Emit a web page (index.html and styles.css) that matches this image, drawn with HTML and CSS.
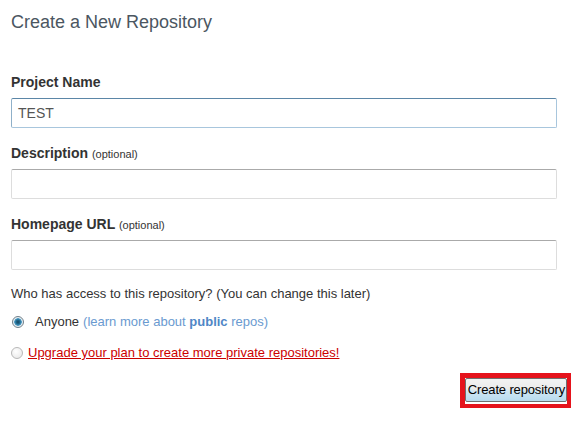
FILE: index.html
```html
<!DOCTYPE html>
<html>
<head>
<meta charset="utf-8">
<link rel="stylesheet" href="styles.css">
</head>
<body>
<div class="page">
  <h1 class="title">Create a New Repository</h1>
  <form class="form">
    <div class="field">
      <label class="label">Project Name</label>
      <div class="input input-focus">TEST</div>
    </div>
    <div class="field">
      <label class="label">Description <span class="opt">(optional)</span></label>
      <div class="input"></div>
    </div>
    <div class="field">
      <label class="label">Homepage URL <span class="opt">(optional)</span></label>
      <div class="input"></div>
    </div>
    <p class="question">Who has access to this repository? (You can change this later)</p>
    <div class="radio-row first">
      <span class="radio checked"></span>
      <span class="anyone">Anyone</span>
      <span class="learn">(learn more about <b>public</b> repos)</span>
    </div>
    <div class="radio-row second">
      <span class="radio"></span>
      <a class="upgrade">Upgrade your plan to create more private repositories!</a>
    </div>
    <div class="actions">
      <div class="highlight"><button type="button" class="btn">Create repository</button></div>
    </div>
  </form>
</div>
</body>
</html>
```
FILE: styles.css
```css
* { box-sizing: border-box; }
html, body { margin: 0; padding: 0; background: #fff; }
body { font-family: "Liberation Sans", Arial, sans-serif; color: #333; }
.page { padding: 10px 1px 0 11px; }
.title {
  margin: 0;
  font-size: 18px;
  font-weight: normal;
  color: #4b5661;
  line-height: 24px;
}
.form { margin-top: 39px; }
.field { margin-bottom: 16px; width: 546px; }
.label {
  display: block;
  font-size: 14px;
  font-weight: bold;
  color: #333;
  line-height: 18px;
  height: 18px;
  margin-bottom: 7px;
}
.opt { font-size: 11px; font-weight: normal; color: #333; line-height: 1; }
.input {
  height: 30px;
  border: 1px solid #ddd;
  border-top-color: #aaa;
  border-radius: 2px;
  font-size: 14px;
  color: #555;
  padding: 6px 6px;
  line-height: 16px;
}
.input-focus {
  border-color: #a8c6dd;
  border-top-color: #5b86a7;
  border-left-color: #8fb0c9;
}
.question {
  margin: 0;
  font-size: 13px;
  line-height: 16px;
  color: #333;
  margin-top: 6px;
}
.radio-row { display: flex; align-items: center; font-size: 13px; line-height: 16px; }
.radio-row.first { margin-top: 12px; }
.radio-row.second { margin-top: 15px; }
.radio {
  width: 12px; height: 12px; border-radius: 50%;
  border: 1px solid #b8b8b8;
  background: radial-gradient(circle at 40% 35%, #fff, #e4e4e4);
  margin-right: 5px;
  flex: none;
}
.radio.checked {
  margin-left: 1px;
  margin-right: 11px;
  border-color: #6f7f8a;
  background: radial-gradient(circle at 50% 50%, #16445f 0, #1f6a8f 2px, #4b9bc4 3.5px, #dfe9ef 4px, #f4f7f9 6px);
}
.anyone { color: #333; margin-right: 4px; }
.learn { color: #6a9ad0; }
.learn b { color: #4f86c6; }
.upgrade { color: #cc0000; text-decoration: underline; }
.actions { display: flex; justify-content: flex-end; margin-top: 12px; }
.highlight {
  border: solid #e5131c;
  border-width: 5px 4px 4px 5px;
  padding: 0 0 2px 0;
}
.btn {
  display: block;
  font-family: "Liberation Sans", Arial, sans-serif;
  font-size: 13px;
  letter-spacing: -0.15px;
  color: #000;
  height: 24px;
  padding: 0 1px 0 2px;
  white-space: nowrap;
  border: 1px solid #707070;
  border-radius: 2px;
  background: linear-gradient(#f2f2f2 0%, #ebebeb 45%, #cfe6f3 55%, #b7dbef 100%);
  line-height: 20px;
}
```
